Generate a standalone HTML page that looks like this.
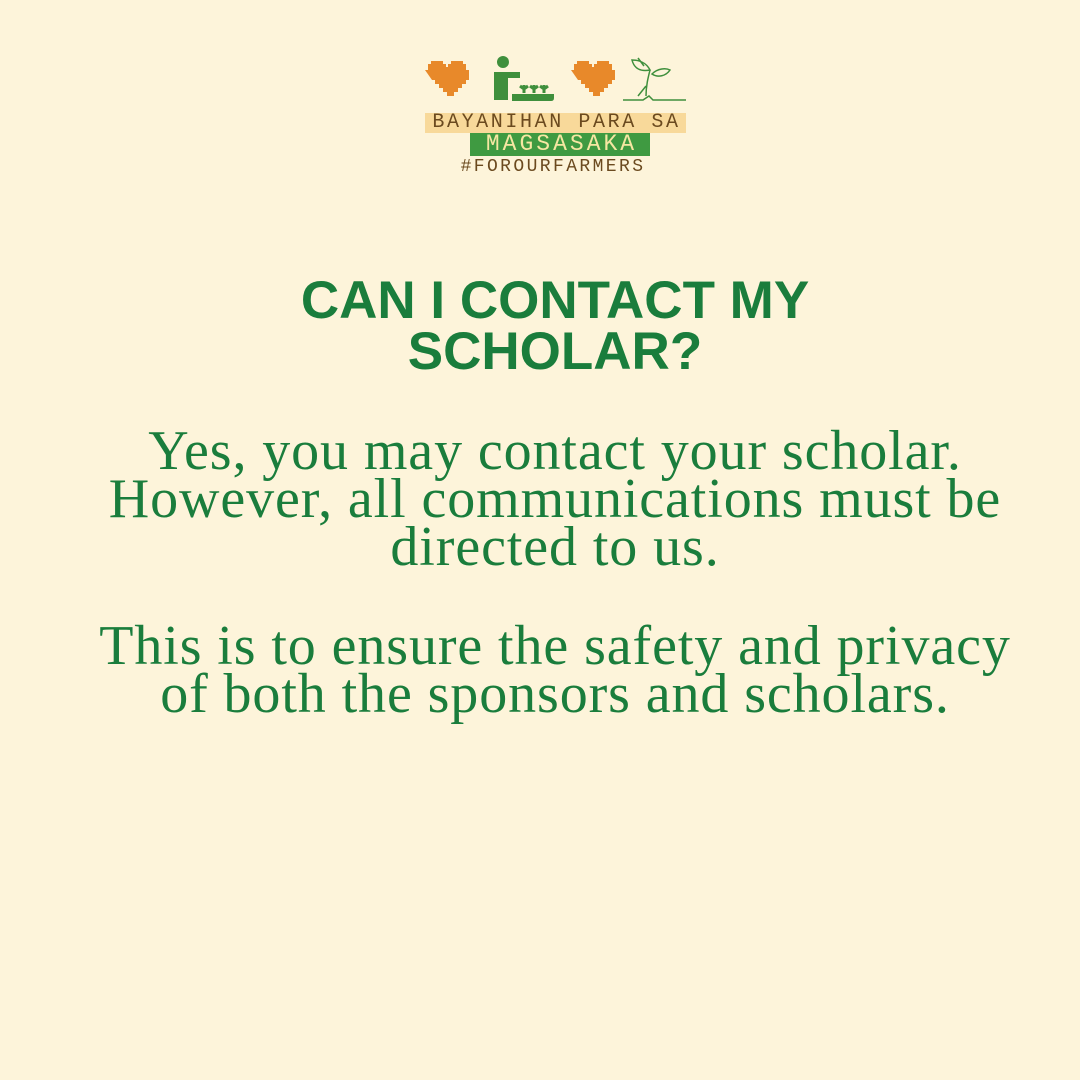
<!DOCTYPE html>
<html><head><meta charset="utf-8"><style>
html,body{margin:0;padding:0}
body{width:1080px;height:1080px;background:#fdf4da;position:relative;overflow:hidden;font-family:"Liberation Sans",sans-serif}
.abs{position:absolute}
.hl{background:#f8d99a;color:#6b4a1f;font-family:"Liberation Mono",monospace;font-size:20px;line-height:20px;letter-spacing:2.6px}
h1{position:absolute;top:275px;left:15px;width:1080px;margin:0;text-align:center;color:#1a7d3c;font-size:53px;line-height:51px;font-weight:900;letter-spacing:0px;font-family:"Liberation Sans",sans-serif}
.p{position:absolute;left:15px;width:1080px;text-align:center;color:#1a7d3c;font-family:"Liberation Serif",serif;font-size:56px;line-height:48px;letter-spacing:0.9px;white-space:nowrap}
</style></head><body>
<svg class="abs" style="left:420px;top:50px" width="280" height="60" viewBox="0 0 280 60">
<path d="M5 20h3v-6h3v-3h12v3h3v3h2v-3h3v-3h12v3h3v6h3v10h-3v4h-4v4h-4v4h-4v4h-7v-4h-4v-4h-4v-4h-4v-4h-3z" fill="#e8892a"/>
<path d="M151 20h3v-6h3v-3h12v3h3v3h2v-3h3v-3h12v3h3v6h3v10h-3v4h-4v4h-4v4h-4v4h-7v-4h-4v-4h-4v-4h-4v-4h-3z" fill="#e8892a"/>
<circle cx="83" cy="12" r="6" fill="#3f8f3c"/>
<path d="M74 22h26v6h-12v22h-14z" fill="#3f8f3c"/>
<path d="M92 44h42v4q0 3-3 3h-39z" fill="#3f8f3c"/>
<g stroke="#3f8f3c" stroke-width="3" fill="none"><path d="M104 43v-8M100 36l4 3 4-3M114 43v-8M110 36l4 3 4-3M124 43v-8M120 36l4 3 4-3"/></g>
<g stroke="#3f8f3c" stroke-width="1.5" fill="none"><path d="M203 50h20l6-4 4 4h33M226 46c0-10 2-18 4-26M230 20c-4-8-12-10-18-10 2 8 8 12 18 10zM232 24c6-6 14-6 18-4-4 6-12 8-18 4zM218 8l6 8M226 36l-8 10"/></g>
</svg>
<div class="abs hl" style="left:425px;top:113px;width:261px;height:20px;text-align:center;white-space:pre;text-indent:2px">BAYANIHAN PARA SA</div>
<div class="abs" style="left:470px;top:133px;width:180px;height:23px;background:#3f9a41;color:#f6e7a2;font-family:'Liberation Mono',monospace;font-size:23px;line-height:23px;text-align:center;letter-spacing:3px;text-indent:3px">MAGSASAKA</div>
<div class="abs" style="left:450px;top:158px;width:204px;color:#6b4a1f;font-family:'Liberation Mono',monospace;font-size:18px;line-height:18px;text-align:center;letter-spacing:2.4px;text-indent:2px">#FOROURFARMERS</div>
<h1>CAN I CONTACT MY<br>SCHOLAR?</h1>
<div class="p" style="top:427px">Yes, you may contact your scholar.<br>However, all communications must be<br>directed to us.</div>
<div class="p" style="top:622px">This is to ensure the safety and privacy<br>of both the sponsors and scholars.</div>
</body></html>
